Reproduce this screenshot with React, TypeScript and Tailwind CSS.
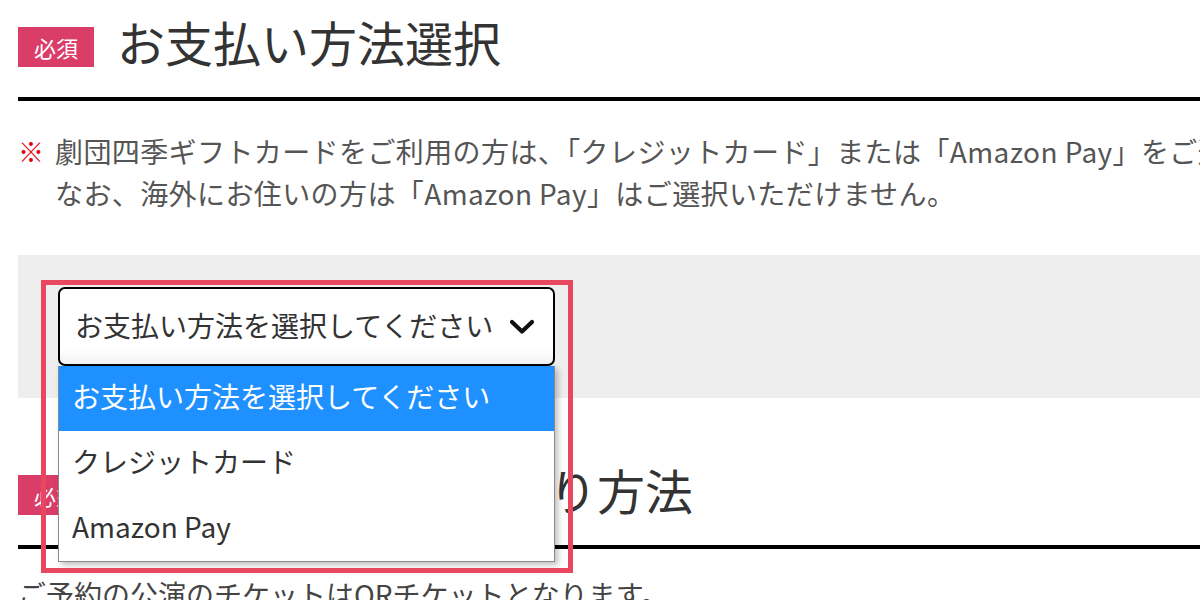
const jp = "font-['Noto_Sans_CJK_JP','Noto_Sans',sans-serif]";

const Chevron = () => (
  <svg width="26" height="16" viewBox="0 0 26 16" fill="none">
    <polyline
      points="3,3 13,12.5 23,3"
      stroke="#111"
      strokeWidth="4.2"
      strokeLinecap="round"
      strokeLinejoin="round"
    />
  </svg>
);

const SectionHead = ({ title }: { title: string }) => (
  <div className="flex items-center gap-[23px] pt-[27px] pb-[30px] border-b-[4px] border-black">
    <span className="flex items-center justify-center w-[76px] h-[40px] bg-[#d93d68] text-white text-[22px] leading-none">
      必須
    </span>
    <h2 className="text-[48px] leading-[40px] text-[#333] -mt-[12px]">{title}</h2>
  </div>
);

const App = () => {
  const options = ["お支払い方法を選択してください", "クレジットカード", "Amazon Pay"];

  return (
    <div className={`relative w-[1200px] h-[600px] overflow-hidden bg-white pl-[18px] ${jp}`}>
      <SectionHead title="お支払い方法選択" />

      <div className="flex mt-[29px] text-[28px] leading-[42px] text-[#555] whitespace-nowrap tracking-[0.4px]">
        <span className="w-[37px] shrink-0 text-[#e60012] text-[26px]">※</span>
        <p>
          劇団四季ギフトカードをご利用の方は、「クレジットカード」または「Amazon Pay」をご選択ください。
          <br />
          なお、海外にお住いの方は「Amazon Pay」はご選択いただけません。
        </p>
      </div>

      <div className="mt-[41px] bg-[#eeeeee] py-[32px] pl-[40px]">
        <div className="relative w-[497px]">
          <div className="flex items-center justify-between h-[79px] rounded-[7px] border-2 border-black bg-gradient-to-b from-white from-80% to-[#f2f2f2] pl-[15px] pr-[18px]">
            <span className="text-[28px] text-[#333] -mt-[3px]">{options[0]}</span>
            <Chevron />
          </div>
          <ul className="absolute left-0 top-full w-[497px] bg-white border border-t-0 border-[#8a8a8a] shadow-[3px_3px_6px_rgba(0,0,0,0.25)] z-10">
            {options.map((o, i) => (
              <li
                key={o}
                className={
                  "h-[65px] flex items-center pl-[13px] pb-[5px] text-[28px] " +
                  (i === 0 ? "bg-[#1e90ff] text-white" : "text-[#333]")
                }
              >
                {o}
              </li>
            ))}
          </ul>
        </div>
      </div>

      <div className="mt-[50px]">
        <SectionHead title="チケットのお受け取り方法" />
      </div>

      <p className="mt-[24px] text-[28px] leading-[42px] text-[#444] whitespace-nowrap">
        ご予約の公演のチケットはQRチケットとなります。
      </p>

      <div className="absolute left-[41px] top-[280px] w-[532px] h-[293px] border-[5px] border-[#e8475f] z-20 pointer-events-none" />
    </div>
  );
};

export default App;
